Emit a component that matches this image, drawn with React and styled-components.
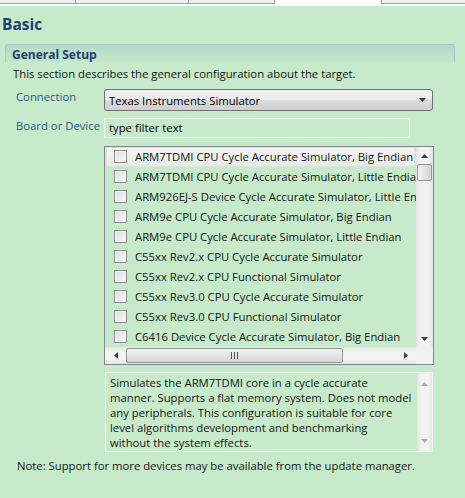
import styled, { createGlobalStyle } from "styled-components"

const GlobalStyle = createGlobalStyle`
  html, body {
    margin: 0;
    padding: 0;
    background: #c7ebca;
  }
  body {
    width: 465px;
    height: 498px;
    overflow: hidden;
    font-family: "Open Sans", "Noto Sans", sans-serif;
    font-size: 11.3px;
    color: #151515;
  }
`

const TabStrip = styled.div`
  display: flex;
  height: 4px;
  border-bottom: 2px solid #fff;
`

const Tab = styled.div`
  box-sizing: border-box;
  width: ${p => p.w}px;
  background: ${p => (p.active ? "#fff" : "#f0f0f0")};
  border-left: 1px solid #a0a0a0;
  border-bottom: ${p => (p.active ? "none" : "1px solid #a0a0a0")};
  &:first-child { border-left: none; }
`

const Title = styled.h1`
  margin: 9px 0 0 2px;
  font-size: 15.5px;
  line-height: 18px;
  font-weight: bold;
  color: #1f3f6e;
`

const Section = styled.section`
  margin: 11px 10px 0 5px;
`

const SectionHeader = styled.div`
  box-sizing: border-box;
  height: 18px;
  padding-left: 6px;
  border: 1px solid #a9c6cf;
  border-bottom: none;
  border-radius: 3px 3px 0 0;
  background: linear-gradient(#b4dac9, #c3e6cb);
  font-weight: bold;
  font-size: 12px;
  line-height: 19px;
  color: #1f3f6e;
`

const SectionBody = styled.div`
  padding-left: 8px;
`

const Description = styled.p`
  margin: 5px 0 0;
  line-height: 14px;
  white-space: nowrap;
`

const Form = styled.div`
  display: grid;
  grid-template-columns: 88px auto;
  row-gap: 7px;
  margin: 8px 0 0 3px;
`

const Label = styled.label`
  align-self: start;
  padding-top: 1px;
  line-height: 14px;
  white-space: nowrap;
  color: #2b5989;
`

const Combo = styled.div`
  box-sizing: border-box;
  width: 329px;
  height: 22px;
  display: flex;
  align-items: center;
  justify-content: space-between;
  padding: 0 6px 0 4px;
  border: 1px solid #707070;
  border-radius: 3px;
  background: linear-gradient(#f2f2f2 0%, #ebebeb 50%, #dddddd 51%, #cfcfcf 100%);
  color: #000;
`

const FilterInput = styled.div`
  box-sizing: border-box;
  width: 306px;
  height: 20px;
  padding-left: 4px;
  line-height: 18px;
  border: 1px solid #e9f6ea;
  color: #000;
`

const ListBox = styled.div`
  grid-column: 2;
  box-sizing: border-box;
  width: 330px;
  margin-top: 1px;
  border: 1px solid #828790;
  display: grid;
  grid-template-columns: 1fr 17px;
  grid-template-rows: 200px 17px;
`

const Rows = styled.div`
  overflow: hidden;
`

const Row = styled.div`
  box-sizing: border-box;
  height: 20px;
  display: flex;
  align-items: center;
  gap: 8px;
  padding: 0 0 1px 7px;
  margin: 0 1px;
  white-space: nowrap;
  border-radius: 2px;
  background: ${p => (p.hover ? "linear-gradient(#f3f5f3, #e7ebe7)" : "transparent")};
  border: 1px solid ${p => (p.hover ? "#dde2de" : "transparent")};
`

const Check = styled.span`
  flex: none;
  box-sizing: border-box;
  width: 13px;
  height: 13px;
  border: 1px solid #8e8f8f;
  background: linear-gradient(135deg, #dcdcdc, #fbfbfb);
  box-shadow: inset 0 0 0 1px #f4f4f4;
`

const VBar = styled.div`
  display: flex;
  flex-direction: column;
  align-items: center;
  background: linear-gradient(90deg, #e5e5e5, #f3f3f3 30%, #f3f3f3 70%, #e5e5e5);
  padding: ${p => p.pad || "0"};
`

const HBar = styled.div`
  display: flex;
  align-items: center;
  padding: 0 4px 0 5px;
  gap: 4px;
  background: linear-gradient(#e5e5e5, #f3f3f3 30%, #f3f3f3 70%, #e5e5e5);
`

const Corner = styled.div`
  background: #f0f0f0;
`

const ArrowBox = styled.div`
  flex: none;
  width: ${p => (p.horizontal ? "12px" : "15px")};
  height: ${p => (p.horizontal ? "15px" : "17px")};
  display: flex;
  align-items: center;
  justify-content: center;
`

const Spacer = styled.div`
  flex: 1;
`

const VThumb = styled.div`
  box-sizing: border-box;
  width: 15px;
  height: 17px;
  border: 1px solid #979797;
  border-radius: 2px;
  background: linear-gradient(90deg, #f3f3f3, #e2e2e2 50%, #d3d3d3);
`

const HThumb = styled.div`
  box-sizing: border-box;
  width: 217px;
  height: 15px;
  display: flex;
  align-items: center;
  justify-content: center;
  border: 1px solid #979797;
  border-radius: 2px;
  background: linear-gradient(#f3f3f3, #e4e4e4 50%, #d4d4d4);
`

const DescBox = styled.div`
  grid-column: 2;
  box-sizing: border-box;
  width: 328px;
  height: 80px;
  margin-left: 1px;
  display: flex;
  border: 1px solid #eaf6ec;
`

const DescText = styled.div`
  flex: 1;
  padding: 2px 0 0 4px;
  line-height: 15px;
  white-space: nowrap;
  overflow: hidden;
`

const Note = styled.p`
  margin: 7px 0 0 17px;
  line-height: 14px;
  white-space: nowrap;
`

const Arrow = ({ dir, disabled }) => {
  const pts = {
    up: "0,4 3.5,0 7,4",
    down: "0,0 3.5,4 7,0",
    left: "4,0 0,3.5 4,7",
    right: "0,0 4,3.5 0,7",
  }[dir]
  const vertical = dir === "up" || dir === "down"
  return (
    <svg width={vertical ? 7 : 4} height={vertical ? 4 : 7} viewBox={vertical ? "0 0 7 4" : "0 0 4 7"}>
      <polygon points={pts} fill={disabled ? "#a8a8a8" : "#404040"} />
    </svg>
  )
}

const Grip = () => (
  <svg width="7" height="7" viewBox="0 0 7 7">
    {[0.5, 3.5, 6.5].map(x => (
      <line key={x} x1={x} y1="0" x2={x} y2="7" stroke="#555" strokeWidth="1" />
    ))}
  </svg>
)

const devices = [
  "ARM7TDMI CPU Cycle Accurate Simulator, Big Endian",
  "ARM7TDMI CPU Cycle Accurate Simulator, Little Endian",
  "ARM926EJ-S Device Cycle Accurate Simulator, Little Endian",
  "ARM9e CPU Cycle Accurate Simulator, Big Endian",
  "ARM9e CPU Cycle Accurate Simulator, Little Endian",
  "C55xx Rev2.x CPU Cycle Accurate Simulator",
  "C55xx Rev2.x CPU Functional Simulator",
  "C55xx Rev3.0 CPU Cycle Accurate Simulator",
  "C55xx Rev3.0 CPU Functional Simulator",
  "C6416 Device Cycle Accurate Simulator, Big Endian",
]

const descLines = [
  "Simulates the ARM7TDMI core in a cycle accurate",
  "manner. Supports a flat memory system. Does not model",
  "any peripherals. This configuration is suitable for core",
  "level algorithms development and benchmarking",
  "without the system effects.",
]

const App = () => {
  return (
    <>
      <GlobalStyle />
      <TabStrip>
        <Tab w={75} />
        <Tab w={113} />
        <Tab w={86} />
        <Tab w={107} active />
        <Tab w={84} />
      </TabStrip>
      <Title>Basic</Title>
      <Section>
        <SectionHeader>General Setup</SectionHeader>
        <SectionBody>
          <Description>This section describes the general configuration about the target.</Description>
          <Form>
            <Label>Connection</Label>
            <Combo>
              <span>Texas Instruments Simulator</span>
              <Arrow dir="down" />
            </Combo>
            <Label>Board or Device</Label>
            <FilterInput>type filter text</FilterInput>
            <ListBox>
              <Rows>
                {devices.map((d, i) => (
                  <Row key={d} hover={i === 0}>
                    <Check />
                    <span>{d}</span>
                  </Row>
                ))}
              </Rows>
              <VBar>
                <ArrowBox><Arrow dir="up" /></ArrowBox>
                <VThumb />
                <Spacer />
                <ArrowBox><Arrow dir="down" /></ArrowBox>
              </VBar>
              <HBar>
                <ArrowBox horizontal><Arrow dir="left" /></ArrowBox>
                <HThumb><Grip /></HThumb>
                <Spacer />
                <ArrowBox horizontal><Arrow dir="right" /></ArrowBox>
              </HBar>
              <Corner />
            </ListBox>
            <DescBox>
              <DescText>
                {descLines.map(l => (
                  <div key={l}>{l}</div>
                ))}
              </DescText>
              <VBar pad="2px 0">
                <ArrowBox><Arrow dir="up" disabled /></ArrowBox>
                <Spacer />
                <ArrowBox><Arrow dir="down" disabled /></ArrowBox>
              </VBar>
            </DescBox>
          </Form>
        </SectionBody>
      </Section>
      <Note>Note: Support for more devices may be available from the update manager.</Note>
    </>
  )
}

export default App
